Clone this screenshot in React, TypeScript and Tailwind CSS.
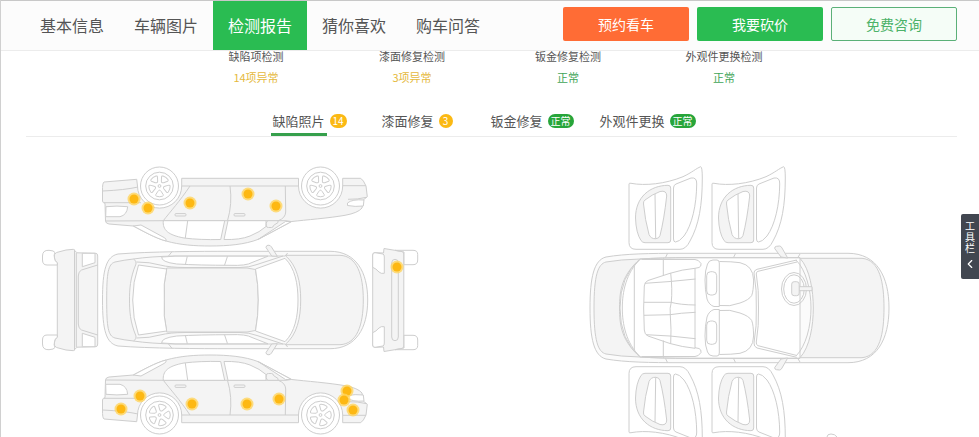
import { useState } from 'react';
import type { ReactNode } from 'react';
import clsx from 'clsx';
import { ChevronLeft } from 'lucide-react';

const NAV = ['基本信息', '车辆图片', '检测报告', '猜你喜欢', '购车问答'];

const SUMMARY = [
  { label: '缺陷项检测', value: '14项异常', ok: false },
  { label: '漆面修复检测', value: '3项异常', ok: false },
  { label: '钣金修复检测', value: '正常', ok: true },
  { label: '外观件更换检测', value: '正常', ok: true },
];

const TABS = [
  { label: '缺陷照片', badge: '14', ok: false },
  { label: '漆面修复', badge: '3', ok: false },
  { label: '钣金修复', badge: '正常', ok: true },
  { label: '外观件更换', badge: '正常', ok: true },
];

const DEFECTS = [
  [134, 199], [148, 208], [190, 203], [248, 194], [276, 206],
  [397, 267],
  [121, 409], [140, 396], [192, 404], [247, 404], [279, 399],
  [347, 391], [344, 400], [353, 410],
];

// Draws the children twice: as they are, and flipped about the line y = axis.
function Mirrored({ axis, children }: { axis: number; children: ReactNode }) {
  return (
    <>
      {children}
      <g transform={`translate(0 ${axis * 2}) scale(1 -1)`}>{children}</g>
    </>
  );
}

function Wheel({ x, y, turn }: { x: number; y: number; turn: number }) {
  return (
    <g transform={`translate(${x} ${y}) rotate(${turn})`} fill="#fff">
      <circle r="19" />
      <circle r="13.8" />
      <circle r="1.4" />
      {[0, 72, 144, 216, 288].map((a) => (
        <path
          key={a}
          d="M4.2 0Q4.3-.9 5.2-1.5L8.6-3.7Q9.7-4.2 10.2-3Q11.3 0 10.2 3Q9.7 4.2 8.6 3.7L5.2 1.5Q4.3.9 4.2 0Z"
          transform={`rotate(${a})`}
        />
      ))}
    </g>
  );
}

function SideBody() {
  return (
    <g>
      <path
        fill="#f4f4f4"
        d="M136.7 421.7L104 419Q102.3 418 102.5 410V400Q102.7 398 105 397.7L105.5 380Q105.7 377.5 109 377L133.3 375C143 370 155 363 166 360C180 356 195 355 210 355C228 355 245 356.5 258.3 361.7L291.7 379.5C305 381 330 383 345 385.7Q358 388 362 393L363.3 401L367.3 404.3L366 415Q363.5 421 360.7 422.7H342.7V415A22 22 0 0 0 298.5 415V422.7H181.7V415A22 22 0 0 0 137.5 415Z"
      />
      <path d="M106 380L163.3 380.3H286L291 379.5" />
      <path
        fill="#fff"
        d="M163.3 380.3C162.5 371 168 366 184 363Q200 361 220.7 361.5L224.7 380.3Z"
      />
      <path
        fill="#fff"
        d="M224 361.5Q240 361 250 365Q260 369 266 374.5V380.3H228Z"
      />
      <path d="M185.3 363L187.7 380.3M181.7 415H298.5" />
      <path fill="#fff" d="M258.3 361.7L285.5 379.5L291.5 379.5Z" />
      <path fill="#fff" d="M133.3 375C143 370 155 363 166 360Q167 362 164 363.5L141 376Z" />
      <path
        fill="#f4f4f4"
        d="M266.3 375Q266.5 373.5 268.5 373.5H271.5Q273.3 373.5 273.5 375.5L278 378.5V380.3H268Q266.3 379.5 266.3 377.5Z"
      />
      <path d="M163.3 380.3C170 389 180 400 190 415M227.5 380.3Q232.5 397 230 415M278.3 380.3Q285.5 383 285.7 389L285.3 415" />
      <rect x="175" y="385" width="11" height="2.4" rx="1" />
      <rect x="234" y="385" width="11" height="2.4" rx="1" />
      <path fill="#fff" d="M105.7 384.3H120Q127 386 127.7 394.3Q117 395.5 106 394.3Z" />
      <path d="M104 398.3H141M102.6 410Q125 411 138 414" />
      <path fill="#fff" d="M347.5 395.5Q355 394 363.3 395L364 401Q352 402 347.5 398Z" />
      <path d="M348 401.7Q358 401.5 366.5 403.7M342.7 415.3H366" />
    </g>
  );
}

function RearPanel() {
  return (
    <g>
      <path
        fill="#f4f4f4"
        d="M57.3 300V262.7Q54.3 261 54.5 258Q53.5 254 56.5 252.5L66 250L73.5 249.3L77 252.8L96 253.3Q97.7 253.5 97.7 256V300"
      />
      <path fill="#fff" d="M82.3 253.3H95V262.7L82.3 266.7Z" />
      <path fill="#fff" d="M55 252.5Q54 250.5 49 250.3Q42.5 250 42.5 256V260Q42.5 265 47 265H57.3V262.7Q54.3 261 54.5 258Q53.5 255 55 252.5Z" />
      <path d="M74.5 249.5V300M76.3 252.8V300M97.7 265L81.5 270Q78.3 271.5 78.3 276V300" />
    </g>
  );
}

function FrontPanel() {
  return (
    <g>
      <path
        fill="#f4f4f4"
        d="M372.7 300V255Q372.7 252.7 375 252.7L383.5 253L384 248.5L402 251.5Q403.8 252 403.8 254V300"
      />
      <path fill="#fff" d="M372.7 267.3V255Q372.7 252.7 375 252.7L383 254Q384.3 254.5 384.3 257V273.3Q381 274 379 272Q376 268.5 372.7 267.3Z" />
      <path fill="#fff" d="M395 250.3H413Q417.7 250.3 417.7 254.5V260Q417.7 264.7 413 264.7H404V252Z" />
      <path d="M391.7 300V263Q391.7 259.3 395 259.3T398.3 263V300" />
    </g>
  );
}

function TopView() {
  return (
    <g>
      <path
        fill="#f9f9f9"
        d="M102.5 300C102.5 270 106 256.5 118 254C150 251.5 200 251.3 230 251.3H330C356 251.3 367.7 272 367.7 300C367.7 328 356 348.7 330 348.7H230C200 348.7 150 348.5 118 346C106 343.5 102.5 330 102.5 300Z"
      />
      {/* boot lid, roof and bonnet */}
      <path
        fill="#f4f4f4"
        d="M106.7 300C106.7 273 108 264 115 262Q124 260 133.5 259Q137 261 136 264C130 278 129.5 290 129.5 300C129.5 310 130 322 136 336Q137 339 133.5 341Q124 340 115 338C108 336 106.7 327 106.7 300Z"
      />
      <path
        fill="#f4f4f4"
        d="M166.7 268Q163 284 164.3 300Q163 316 166.7 332H247L255.5 330.5Q258.3 316 258.3 300Q258.3 284 255.5 269.5L247 268Z"
      />
      <path
        fill="#f4f4f4"
        d="M285 255.3H340C357 256 363.3 275 363.3 300C363.3 325 357 344 340 344.7H285C297 335 300.7 318 300.7 300C300.7 282 297 265 285 255.3Z"
      />
      <path
        fill="#fff"
        d="M138.5 265Q132.7 282 132.7 300Q132.7 318 138.5 335L166.7 331Q163 316 164.3 300Q163 284 166.7 269Z"
      />
      <path
        fill="#fff"
        d="M255.5 269L285 258.3C295 268 298 284 298 300C298 316 295 332 285 341.7L255.5 331Q258.3 316 258.3 300Q258.3 284 255.5 269Z"
      />
      <Mirrored axis={300}>
        <path d="M133.5 259Q150 256.5 175 256H285M136.7 262Q150 262 160 265Q170 267.5 185 267.5H240Q249 267.5 257 264.5L283 256" />
        <path
          fill="#fff"
          d="M161.7 257Q161 262 176.7 264Q200 265.3 230 265.3Q246 266 252 262.5L268 256.2H175Z"
        />
        <path d="M187.3 256.3L185.3 264.8M227.5 256.3L224.5 265.3M172 251.7L168.5 256M287.5 253L286 255.5" />
        <path
          fill="#f4f4f4"
          d="M271.7 256L266 247.5Q266 245.5 268 245.2Q270.5 245 271.5 247L277.3 256.3Z"
        />
      </Mirrored>
    </g>
  );
}

function OpenDoor() {
  return (
    <g>
      <path d="M629 184Q629 182.8 631 183.3C645 186 665 184 683 176.7C692 172.5 696 168.5 700.7 166.7Q702.3 167 702.3 178C702.3 205 699 225 690 241Q686 249.3 680 249.3H636Q629 249.3 629 242.5Z" />
      <path
        fill="#f4f4f4"
        d="M670.7 188Q670.7 185.3 668 185.3C650 185.5 635.5 197 635.5 218Q636 233 641 240.5Q642.5 242.7 645 242.7H668Q670.7 242.7 670.7 240Z"
      />
      <path
        fill="#fff"
        d="M643.5 204Q643 201.5 645 200Q652 194.5 660 191.5Q666.7 190 666.7 196Q664 220 660 235.5Q659 238.7 655.7 238.7Q651 239 649 234.5Q645 220 643.5 204Z"
      />
      <path d="M655 194L655.7 238.7" />
      <path d="M673.5 188Q673.5 185 676 184L691 178Q697 177 696.7 184C696.5 205 692 225 684 236Q679 242 675.5 242Q673.5 242 673.5 239Z" />
    </g>
  );
}

function Cabin() {
  return (
    <g>
      <path
        fill="#fbfbfb"
        d="M590 308C590 277 594 260 606 257C625 253.7 650 253.3 680 253.3H848C877 253.3 889 277 889 308C889 339 877 362.7 848 362.7H680C650 362.7 625 362.3 606 359C594 356 590 339 590 308Z"
      />
      <path fill="#fff" d="M640 259Q660 257.7 690 257.7H800V358.3H690Q660 358.3 640 357Q620 340 620 308Q620 276 640 259Z" />
      <path
        fill="#f4f4f4"
        d="M594 308C594 275 598 264 606 262Q620 259.5 640 259C622 275 619.5 290 619.5 308C619.5 326 622 341 640 357Q620 356.5 606 354C598 352 594 341 594 308Z"
      />
      <path d="M640 259.5C626 273 622.3 292 622.3 308C622.3 324 626 343 640 356.5M634.3 266V350" />
      {/* rear bench */}
      <path d="M695 268.3Q682 269.5 670 273.3L648 280.5Q644.5 282 644.3 286Q643 308 644.3 330Q644.5 334.5 648 336L670 343.5Q682 347 695 348.3ZM670.7 273Q672.5 290 671.3 302Q669.5 308 670.3 315Q671.5 330 670.7 343.5" />
      <path d="M645 283.3L670 281.5L695.5 279M644 302.3H671Q680 304.8 695.5 305M644 315.3L670 314.7Q680 313 695.5 312.3M646 334.7L670 336L695.5 338.7" />
      {/* bonnet and dashboard */}
      <path
        fill="#f4f4f4"
        d="M800 258.3H862C880 260 884 283 884 308C884 333 880 356 862 357.7H800C810 347 813.3 325 813.3 308C813.3 291 810 269 800 258.3Z"
      />
      <path d="M796 260C806 270 811 290 811 308C811 326 806 346 796 356" />
      <path d="M796.7 260L757 269.3Q753.7 270.5 754 273Q757 290 756.3 308Q757 326 754 343Q753.7 346.5 757 348L796.7 357.3M797 262L758 271.3Q756 272 756.3 274Q759 290 758.5 308Q759 326 756.3 342Q756 345 758 345.7L796 355.3" />
      <ellipse cx="794" cy="289" rx="12.5" ry="16.5" />
      <ellipse cx="794" cy="289" rx="10.3" ry="14.2" />
      <path fill="#f4f4f4" d="M799 286.7H812V290.7H799Z" />
      <rect x="791.7" y="281.7" width="7.5" height="14" rx="2.5" fill="#f4f4f4" />
      <Mirrored axis={308}>
        <path d="M640 259Q660 257.7 690 257.7H800M663.3 258.2V275.5M667.5 253.5L665.5 257.5M735.5 253.5L733.5 257.5M800 254L797.5 258" />
        <path d="M641.7 259.5H695Q698.5 259.5 701 263.5Q701.5 266.5 699 267.5L695 268.3" />
        <path d="M719.3 306.5H714Q709 305 707 299Q705 290 705 280Q705 270 707.5 264Q709 260 713 260H717Q719.3 260 719.3 263Z" />
        <rect x="706.7" y="271.7" width="10" height="23.3" rx="4" />
        <path d="M719.3 261.5Q732 261.5 740 262.7Q753.3 265.5 753.6 280Q753.5 291 751.7 295.5Q749 300 740 303Q730 307 719.3 305.5" />
        <path
          fill="#f4f4f4"
          d="M781 257L774.7 248.5Q774.5 246.5 776.5 246.3L779.5 246Q781 246 782 248L787.7 258Z"
        />
      </Mirrored>
    </g>
  );
}

function CarDiagram() {
  return (
    <svg
      viewBox="26 137 931 300"
      className="block w-full"
      fill="none"
      stroke="#cecece"
      strokeLinejoin="round"
      aria-hidden="true"
    >
      <Mirrored axis={300.5}>
        <SideBody />
      </Mirrored>
      <Wheel x={159.5} y={186} turn={90} />
      <Wheel x={320.5} y={186} turn={90} />
      <Wheel x={159.5} y={415} turn={0} />
      <Wheel x={320.5} y={415} turn={0} />
      <Mirrored axis={300}>
        <RearPanel />
        <FrontPanel />
      </Mirrored>
      <TopView />

      <Mirrored axis={308}>
        <OpenDoor />
        <g transform="translate(83 0)">
          <OpenDoor />
        </g>
      </Mirrored>
      <Cabin />
      <path d="M827 437Q827 434 831 434T837 437" />

      {DEFECTS.map(([x, y]) => (
        <g key={`${x}-${y}`} stroke="none">
          <circle cx={x} cy={y} r="6.5" fill="#ffd45e" fillOpacity="0.8" />
          <circle cx={x} cy={y} r="4.5" fill="#fdb813" />
        </g>
      ))}
    </svg>
  );
}

export default function App() {
  const [section, setSection] = useState(2);
  const [tab, setTab] = useState(0);

  return (
    <div className="h-screen overflow-hidden border-l border-[#d0d0d0] bg-white font-['Noto_Sans_CJK_SC',sans-serif] text-[#555555]">
      <header className="relative z-10 flex items-start justify-between border-t border-b border-t-[#c8c8c8] border-b-[#ececec] bg-[#fcfcfc] pr-[22px] pl-6">
        <nav className="flex">
          {NAV.map((item, i) => (
            <a
              key={item}
              href="#"
              onClick={() => setSection(i)}
              className={clsx(
                'h-[49px] px-[15px] text-base leading-[49px] whitespace-nowrap',
                i === section && 'bg-[#2abc52] text-white'
              )}
            >
              {item}
            </a>
          ))}
        </nav>
        <div className="flex gap-2 pt-1.5 text-sm">
          <button type="button" className="h-[34px] w-[126px] rounded-xs bg-[#ff6c35] text-white">
            预约看车
          </button>
          <button type="button" className="h-[34px] w-[126px] rounded-xs bg-[#2abc52] text-white">
            我要砍价
          </button>
          <button
            type="button"
            className="h-[34px] w-[126px] rounded-xs border border-[#5bb078] bg-[#f5fdf7] text-[#4cb269]"
          >
            免费咨询
          </button>
        </div>
      </header>

      <main>
        <dl className="mx-auto -mt-[5px] grid w-[624px] grid-cols-4 text-center text-[11px] leading-[21px]">
          {SUMMARY.map((s) => (
            <div key={s.label}>
              <dt>{s.label}</dt>
              <dd className={s.ok ? 'text-[#3fa558]' : 'text-[#e5b93c]'}>{s.value}</dd>
            </div>
          ))}
        </dl>

        <div className="mt-[17px] mr-[22px] ml-[25px] border-b border-[#ececec]">
          <div className="mx-auto flex w-[442px]">
            {TABS.map((t, i) => (
              <button
                key={t.label}
                type="button"
                onClick={() => setTab(i)}
                className="flex h-[31px] w-[109px] items-center whitespace-nowrap"
              >
                <span
                  className={clsx(
                    'h-full border-b-3 px-0.5 text-[13px] leading-[31px]',
                    i === tab ? 'border-[#36a04c]' : 'border-transparent'
                  )}
                >
                  {t.label}
                </span>
                <span
                  className={clsx(
                    'ml-[3px] min-w-3.5 rounded-full px-[3px] text-center text-[10px] leading-[14px] text-white',
                    t.ok ? 'bg-[#27a53a]' : 'bg-[#fbb914]'
                  )}
                >
                  {t.badge}
                </span>
              </button>
            ))}
          </div>
        </div>

        <div className="mr-[22px] ml-[25px]">
          <CarDiagram />
        </div>
      </main>

      <button
        type="button"
        className="fixed top-[214px] right-0 flex w-[18px] flex-col items-center rounded-l-xs bg-[#414650] pt-1.5 pb-2 text-[10px] leading-[11px] text-white"
      >
        <span className="w-2.5">工具栏</span>
        <ChevronLeft className="mt-1 h-3.5 w-3.5" strokeWidth={2} />
      </button>
    </div>
  );
}
